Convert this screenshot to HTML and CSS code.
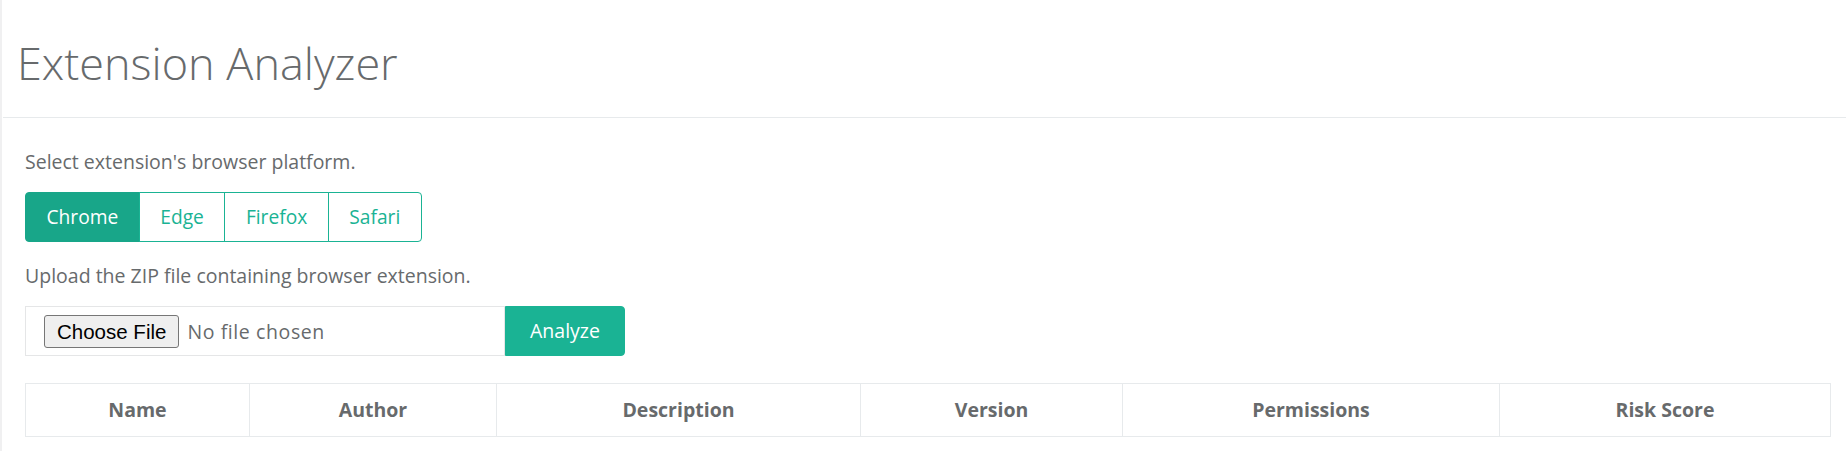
FILE: index.html
```html
<!DOCTYPE html>
<html lang="en">
<head>
<meta charset="utf-8">
<title>Extension Analyzer</title>
<link rel="stylesheet" href="styles.css">
</head>
<body>
<div class="wrapper">
  <header class="page-heading">
    <h1 class="title">Extension Analyzer</h1>
  </header>
  <main class="content">
    <p class="label">Select extension's browser platform.</p>
    <div class="btn-group">
      <button class="btn btn-active" type="button">Chrome</button>
      <button class="btn" type="button">Edge</button>
      <button class="btn" type="button">Firefox</button>
      <button class="btn" type="button">Safari</button>
    </div>
    <p class="label">Upload the ZIP file containing browser extension.</p>
    <div class="upload-group">
      <div class="file-box"><input class="file-input" type="file"></div>
      <button class="btn-analyze" type="button">Analyze</button>
    </div>
    <table class="results">
      <colgroup>
        <col class="col-name">
        <col class="col-author">
        <col class="col-desc">
        <col class="col-version">
        <col class="col-perm">
        <col class="col-risk">
      </colgroup>
      <thead>
        <tr>
          <th>Name</th>
          <th>Author</th>
          <th>Description</th>
          <th>Version</th>
          <th>Permissions</th>
          <th>Risk Score</th>
        </tr>
      </thead>
    </table>
  </main>
</div>
</body>
</html>
```
FILE: styles.css
```css
html, body {
  margin: 0;
  padding: 0;
  background: #ffffff;
}

body {
  font-family: "Open Sans", "Liberation Sans", sans-serif;
  font-size: 19.5px;
  line-height: 28px;
  color: #676a6c;
}

.wrapper {
  min-height: 100vh;
  border-left: 2px solid #f0f0f1;
  box-sizing: border-box;
}

.page-heading {
  padding: 38px 14px 30px;
  margin-left: 1px;
  border-bottom: 1px solid #e7eaec;
}

.title {
  margin: 0;
  font-family: "Open Sans", sans-serif;
  font-weight: 300;
  font-size: 45px;
  line-height: 49px;
  color: #676a6c;
}

.content {
  padding: 30px 16px 20px 23px;
}

.label {
  margin: 0 0 16px;
}

.btn-group {
  display: flex;
  margin-bottom: 20px;
}

.btn {
  font-family: "Open Sans", sans-serif;
  font-size: 19.2px;
  line-height: 28px;
  padding: 10px 20.5px;
  margin: 0 0 0 -1px;
  border: 1px solid #1ab394;
  background: #ffffff;
  color: #1ab394;
  border-radius: 0;
  cursor: pointer;
}

.btn:first-child {
  margin-left: 0;
  border-radius: 4px 0 0 4px;
}

.btn:last-child {
  border-radius: 0 4px 4px 0;
}

.btn-active {
  background: #18a689;
  border-color: #18a689;
  color: #ffffff;
}

.upload-group {
  display: flex;
  height: 50px;
  margin-bottom: 27px;
}

.file-box {
  width: 480px;
  box-sizing: border-box;
  border: 1px solid #e5e6e7;
  display: flex;
  align-items: center;
  padding: 1px 18px 0;
}

.file-input {
  font-family: "Open Sans", sans-serif;
  font-size: 19.5px;
  color: #676a6c;
  letter-spacing: 0.6px;
}

.file-input::file-selector-button {
  font-family: "Liberation Sans", Arial, sans-serif;
  font-size: 20.5px;
  letter-spacing: 0;
  line-height: 23px;
  color: #000000;
  background: #efefef;
  border: 1px solid #767676;
  border-radius: 3px;
  padding: 4px 12px;
  margin-right: 8px;
}

.btn-analyze {
  width: 120px;
  height: 50px;
  border: 1px solid #1ab394;
  background: #1ab394;
  color: #ffffff;
  font-family: "Open Sans", sans-serif;
  font-size: 19.5px;
  line-height: 28px;
  border-radius: 0 4px 4px 0;
  padding: 0;
  cursor: pointer;
}

.results {
  width: 1805px;
  table-layout: fixed;
  border-collapse: collapse;
  border: 1px solid #e7eaec;
}

.results th {
  border: 1px solid #e7eaec;
  padding: 12px 8px;
  font-weight: 700;
  text-align: center;
  color: #676a6c;
}

.col-name { width: 224px; }
.col-author { width: 247px; }
.col-desc { width: 364px; }
.col-version { width: 262px; }
.col-perm { width: 377px; }
.col-risk { width: 331px; }
```
